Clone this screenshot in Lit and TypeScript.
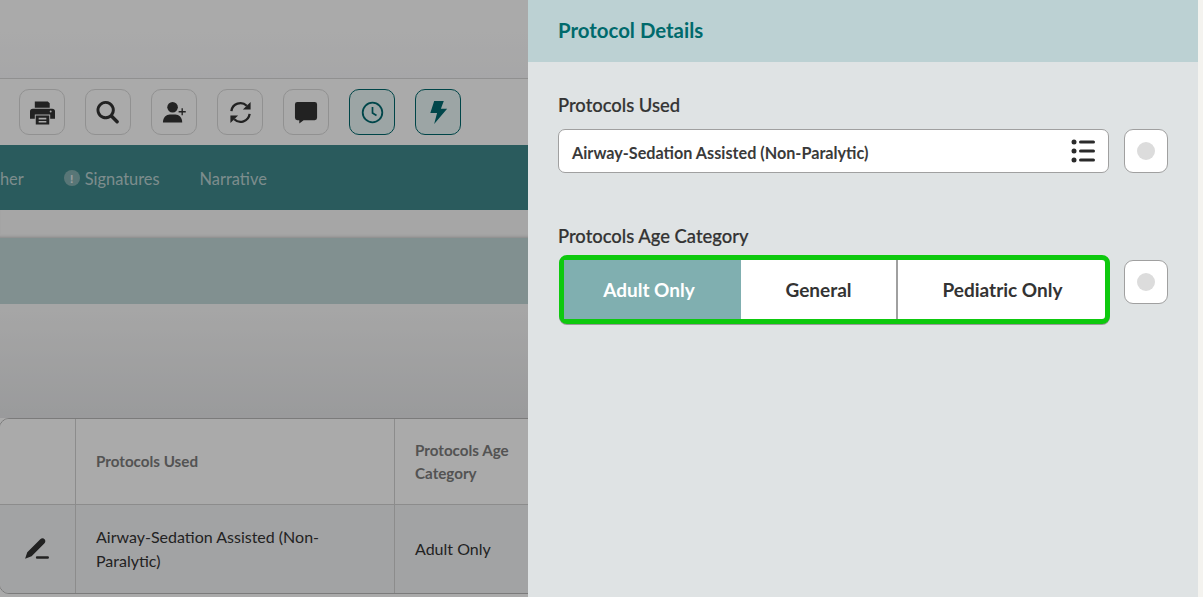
import { LitElement, html, css, svg } from "lit";
import { customElement } from "lit/decorators.js";

const tools = [
  // printer
  svg`<path d="M5 1.500h13.500L20.500 3.500V8H5z"/><path fill-rule="evenodd" d="M3 9h20a3 3 0 0 1 3 3v7.500h-5V15H5v4.500H0V12a3 3 0 0 1 3-3zM21.500 11a1 1 0 1 0 0 2 1 1 0 0 0 0-2z"/><path fill-rule="evenodd" d="M6 16h14v9.500H6zM9 18.500v1.700h8v-1.700zM9 21.800v1.700h8v-1.700z"/>`,
  // magnifier
  svg`<path fill-rule="evenodd" d="M10 1a9.500 9.500 0 1 0 5.300 17.400l5.400 5.400a1.700 1.700 0 0 0 2.500-2.500l-5.400-5.400A9.500 9.500 0 0 0 10 1zm0 3a6.500 6.500 0 1 1 0 13 6.500 6.500 0 0 1 0-13z"/>`,
  // person with plus
  svg`<circle cx="11" cy="7.500" r="5.500"/><path d="M1 23c0-5 3.500-8 7-8h6c3.500 0 7 3 7 8v.500H1z"/><path d="M20.300 8.500h1.400v3h3v1.400h-3v3h-1.400v-3h-3v-1.400h3z"/>`,
  // sync arrows
  svg`<path d="M3.500 11.500a9.500 9.500 0 0 1 16-5.500M22.500 14.500a9.500 9.500 0 0 1-16 5.500" fill="none" stroke="currentColor" stroke-width="2.400"/><path d="M23.500 2v8h-8zM2.500 24v-8h8z"/>`,
  // speech bubble
  svg`<path d="M3.500 2h18A2.500 2.500 0 0 1 24 4.500v14a2.500 2.500 0 0 1-2.500 2.500H10l-4.500 3.500V21h-2A2.500 2.500 0 0 1 1 18.500v-14A2.500 2.500 0 0 1 3.500 2z"/>`,
];

const clock = svg`<circle cx="12.500" cy="12.500" r="9.800" fill="none" stroke="currentColor" stroke-width="1.800"/><path d="M12.500 7v6l4 2.500" fill="none" stroke="currentColor" stroke-width="1.700"/>`;
const bolt = svg`<path d="M8.500 1h10l-3 8h6.500L8.500 25l3-11.500H4.500z"/>`;

const columns = [
  { head: "", cell: "" },
  { head: "Protocols Used", cell: "Airway-Sedation Assisted (Non-Paralytic)" },
  { head: "Protocols Age Category", cell: "Adult Only" },
];

@customElement("proto-table")
class ProtoTable extends LitElement {
  static styles = css`
    :host {
      display: grid;
      grid-template-columns: 76px 319px 140px;
      grid-template-rows: 86px 88px;
      width: 537px;
      margin-left: -1px;
      border: 1px solid #b9b9b9;
      border-radius: 10px 0 0 10px;
      overflow: hidden;
      box-sizing: border-box;
      font-size: 16px;
      line-height: 24px;
      color: #333;
    }
    .head,
    .cell {
      display: flex;
      align-items: center;
      padding: 0 12px 0 20px;
      border-right: 1px solid #d3d3d3;
      box-sizing: border-box;
    }
    .head {
      background: #fff;
      color: #7d7d7d;
      font-size: 15.200px;
      font-weight: 700;
      line-height: 23px;
      border-bottom: 1px solid #d3d3d3;
    }
    .cell {
      background: #f4f5f7;
    }
    .pen {
      justify-content: center;
      padding: 0 1px 3px 0;
    }
    .pen svg {
      width: 26px;
      height: 26px;
      fill: #333;
    }
  `;

  render() {
    return html`
      ${columns.map((c) => html`<div class="head">${c.head}</div>`)}
      <div class="cell pen">
        <svg viewBox="0 0 24 24">
          <path d="M1 22l2-6L15 4c1.300-1.200 3-1.200 4 0s1 2.700-.300 3.900L7 19.500z" />
          <rect x="11" y="19.500" width="12" height="2.500" rx="1" />
        </svg>
      </div>
      <div class="cell">${columns[1].cell}</div>
      <div class="cell">${columns[2].cell}</div>
    `;
  }
}

@customElement("app-root")
export class AppRoot extends LitElement {
  static styles = css`
    :host {
      display: block;
      position: relative;
      width: 1203px;
      height: 597px;
      overflow: hidden;
      background: #fff;
      font-family: Lato, "Liberation Sans", sans-serif;
    }
    .topbar {
      height: 78px;
      background: linear-gradient(#fff 40%, #fafafc);
      border-bottom: 1px solid #d8d8d8;
    }
    .tools {
      display: flex;
      gap: 20px;
      height: 66px;
      align-items: center;
      padding-left: 19px;
    }
    .tool {
      display: flex;
      align-items: center;
      justify-content: center;
      width: 46px;
      height: 46px;
      box-sizing: border-box;
      border: 1px solid #dadada;
      border-radius: 10px;
      color: #333;
    }
    .tool.on {
      border-color: #00686c;
      background: #ebf8f8;
      color: #006a70;
    }
    .tool svg {
      width: 25px;
      height: 25px;
      fill: currentColor;
    }
    .tabs {
      display: flex;
      align-items: center;
      gap: 40px;
      height: 65px;
      padding-top: 1px;
      box-sizing: border-box;
      background: linear-gradient(90deg, #40898c, #40898c 55%, #5d9a9c);
      color: #bcd4d4;
      font-size: 16.400px;
    }
    .tabs span {
      display: flex;
      align-items: center;
      gap: 5px;
    }
    .tabs .other {
      margin-left: -19px;
    }
    .alert {
      display: inline-flex;
      align-items: center;
      justify-content: center;
      width: 16px;
      height: 16px;
      border-radius: 50%;
      background: #85b2b3;
      color: #e8efef;
      font-size: 12px;
      font-weight: 700;
    }
    .gap {
      height: 28px;
      background: #f9f9f9;
      box-shadow: inset 0 -3px 3px -2px #ccc;
    }
    .band {
      height: 66px;
      background: #c2d9d9;
    }
    .space {
      height: 114px;
      background: linear-gradient(#fafafa, #e7e8ea);
    }
    .scrim {
      position: absolute;
      inset: 0;
      background: rgba(0, 0, 0, 0.335);
    }
    .drawer {
      position: absolute;
      top: 0;
      bottom: 0;
      left: 528px;
      right: 0;
      background: #dfe3e4;
      border-right: 5px solid #f4f3ef;
      color: #333;
    }
    .title {
      height: 62px;
      box-sizing: border-box;
      padding: 0 30px 2px;
      display: flex;
      align-items: center;
      background: #bcd1d3;
      color: #006a6c;
      font-size: 20.400px;
      font-weight: 700;
    }
    .body {
      display: flex;
      flex-direction: column;
      padding: 32px 30px 0;
    }
    label {
      font-size: 18.400px;
      line-height: 22px;
      margin-bottom: 13px;
      font-weight: 500;
      -webkit-text-stroke: 0.2px #333;
    }
    .line {
      display: flex;
      gap: 15px;
      align-items: flex-start;
    }
    .select {
      display: flex;
      align-items: center;
      justify-content: space-between;
      width: 551px;
      height: 44px;
      box-sizing: border-box;
      padding: 0 13px;
      background: #fff;
      border: 1px solid #a0a0a0;
      border-radius: 7px;
      font-size: 16.200px;
      font-weight: 700;
      color: #3a3a3a;
    }
    .select span {
      margin-top: 2px;
    }
    .select svg {
      width: 24px;
      height: 24px;
      fill: #2a2a2a;
    }
    .toggle {
      display: flex;
      align-items: center;
      justify-content: center;
      width: 44px;
      height: 44px;
      box-sizing: border-box;
      background: #fff;
      border: 1px solid #a0a0a0;
      border-radius: 9px;
    }
    .toggle i {
      width: 18px;
      height: 18px;
      border-radius: 50%;
      background: #dcdcdc;
    }
    .age {
      margin-top: 52px;
    }
    .age label {
      display: block;
      margin-bottom: 8px;
    }
    .segments {
      display: grid;
      grid-template-columns: 177px 155px 1fr;
      width: 551px;
      height: 69px;
      box-sizing: border-box;
      border: 5px solid #0ec90e;
      border-radius: 8px;
      box-shadow: 0 1px 0 #999;
      background: #fff;
      font-size: 19px;
      font-weight: 700;
      margin-left: 1px;
    }
    .segments div {
      display: flex;
      align-items: center;
      justify-content: center;
      color: #333;
    }
    .segments div:last-child {
      border-left: 2px solid #a0a0a0;
      padding-left: 2px;
    }
    .segments .picked {
      background: #80afb0;
      color: #fff;
      padding-right: 7px;
    }
    .age .line {
      gap: 14px;
    }
    .age .toggle {
      margin-top: 5px;
    }
  `;

  render() {
    return html`
      <div class="topbar"></div>
      <div class="tools">
        ${tools.map((t) => html`<div class="tool"><svg viewBox="0 0 26 26">${t}</svg></div>`)}
        <div class="tool on"><svg viewBox="0 0 25 25">${clock}</svg></div>
        <div class="tool on"><svg viewBox="0 0 26 26">${bolt}</svg></div>
      </div>
      <div class="tabs">
        <span class="other">Other</span>
        <span><b class="alert">!</b>Signatures</span>
        <span>Narrative</span>
      </div>
      <div class="gap"></div>
      <div class="band"></div>
      <div class="space"></div>
      <proto-table></proto-table>
      <div class="scrim"></div>
      <aside class="drawer">
        <div class="title">Protocol Details</div>
        <div class="body">
          <label>Protocols Used</label>
          <div class="line">
            <div class="select">
              <span>Airway-Sedation Assisted (Non-Paralytic)</span>
              <svg viewBox="0 0 24 24">
                <circle cx="3" cy="3" r="2.500" />
                <circle cx="3" cy="12" r="2.500" />
                <circle cx="3" cy="21" r="2.500" />
                <rect x="8" y="1.500" width="16" height="3" rx="1.500" />
                <rect x="8" y="10.500" width="16" height="3" rx="1.500" />
                <rect x="8" y="19.500" width="16" height="3" rx="1.500" />
              </svg>
            </div>
            <div class="toggle"><i></i></div>
          </div>
          <div class="age">
            <label>Protocols Age Category</label>
            <div class="line">
              <div class="segments">
                <div class="picked">Adult Only</div>
                <div>General</div>
                <div>Pediatric Only</div>
              </div>
              <div class="toggle"><i></i></div>
            </div>
          </div>
        </div>
      </aside>
    `;
  }
}
